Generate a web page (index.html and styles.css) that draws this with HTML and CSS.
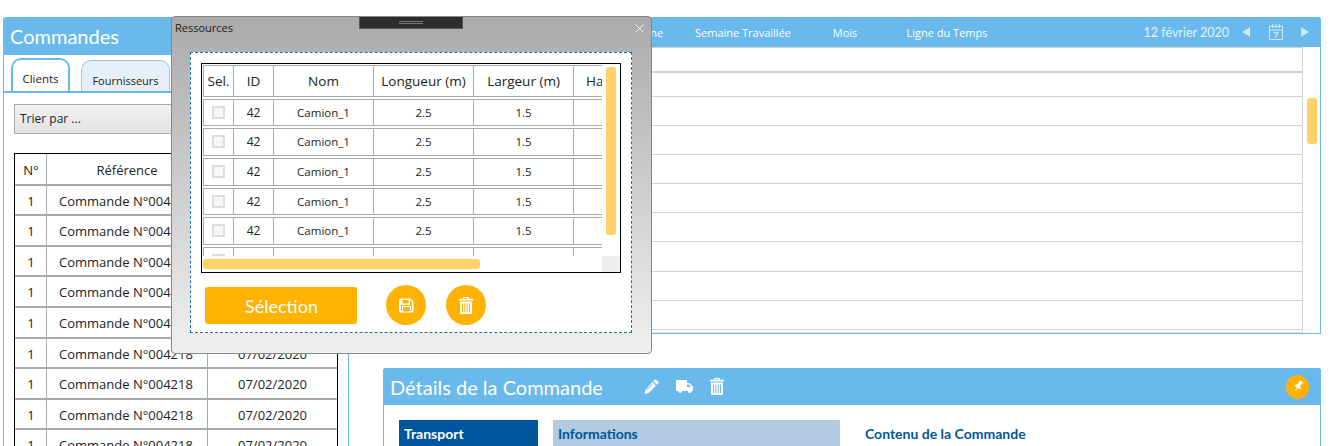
FILE: index.html
```html
<!DOCTYPE html>
<html lang="fr">
<head>
    <meta charset="UTF-8">
    <title>Commandes</title>
    <link rel="stylesheet" href="styles.css">
</head>

<body>
    <div class="app">
        <!-- Commandes -->
        <section class="orders">
            <h1 class="orders-title">Commandes</h1>
            <div class="tabs">
                <div class="tab active">Clients</div>
                <div class="tab">Fournisseurs</div>
            </div>
            <div class="sort">Trier par ...</div>
            <div class="orders-table">
                <div class="o-row o-head"><span>N°</span><span>Référence</span><span>Date</span></div>
                <div class="o-row"><span>1</span><span>Commande N°004218</span><span>07/02/2020</span></div>
                <div class="o-row"><span>1</span><span>Commande N°004218</span><span>07/02/2020</span></div>
                <div class="o-row"><span>1</span><span>Commande N°004218</span><span>07/02/2020</span></div>
                <div class="o-row"><span>1</span><span>Commande N°004218</span><span>07/02/2020</span></div>
                <div class="o-row"><span>1</span><span>Commande N°004218</span><span>07/02/2020</span></div>
                <div class="o-row"><span>1</span><span>Commande N°004218</span><span>07/02/2020</span></div>
                <div class="o-row"><span>1</span><span>Commande N°004218</span><span>07/02/2020</span></div>
                <div class="o-row"><span>1</span><span>Commande N°004218</span><span>07/02/2020</span></div>
                <div class="o-row"><span>1</span><span>Commande N°004218</span><span>07/02/2020</span></div>
            </div>
        </section>

        <div class="main">
            <!-- Planning -->
            <section class="planning">
                <div class="planning-bar">
                    <nav class="views">
                        <span>Jour</span>
                        <span>Semaine</span>
                        <span>Semaine Travaillée</span>
                        <span>Mois</span>
                        <span>Ligne du Temps</span>
                    </nav>
                    <span class="date">12 février 2020</span>
                    <svg class="date-icon" width="10" height="12" viewBox="0 0 10 12"><path d="M9 1 1 6l8 5z"/></svg>
                    <svg class="date-icon cal" width="16" height="18" viewBox="0 0 16 18">
                        <path d="M1.5 3.5h13v13h-13zM1.5 7h13M4.5 1v4M8 1v4M11.5 1v4" fill="none" stroke="currentColor"/>
                        <path d="M5.5 9h5v1.2L8 15H6.6l2.4-4.7H5.5z"/>
                    </svg>
                    <svg class="date-icon" width="10" height="12" viewBox="0 0 10 12"><path d="M1 1l8 5-8 5z"/></svg>
                </div>
                <div class="planning-body">
                    <div class="lines">
                        <div class="line first"></div>
                        <div class="line second"></div>
                        <div class="line"></div>
                        <div class="line"></div>
                        <div class="line"></div>
                        <div class="line"></div>
                        <div class="line"></div>
                        <div class="line"></div>
                        <div class="line"></div>
                        <div class="line"></div>
                    </div>
                    <div class="planning-scroll"><div class="thumb"></div></div>
                </div>
            </section>

            <!-- Détails -->
            <section class="details">
                <div class="details-bar">
                    <h2>Détails de la Commande</h2>
                    <div class="details-tools">
                        <svg width="15" height="15" viewBox="0 0 16 16"><path d="M11.3.8a1.2 1.2 0 0 1 1.7 0l2.2 2.2a1.2 1.2 0 0 1 0 1.700l-1.500 1.500-3.900-3.900zM8.800 3.300l3.900 3.900-8 8-4 .7.7-4zM8.800 5l-5.800 5.800.6.6 5.800-5.800z" fill-rule="evenodd"/></svg>
                        <svg width="17" height="14" viewBox="0 0 17 14"><path d="M1 0h9a1 1 0 0 1 1 1v2h2.500L17 6.500V11h-1.300a2 2 0 0 1-4 0H6.300a2 2 0 0 1-4 0H1a1 1 0 0 1-1-1V1a1 1 0 0 1 1-1zM11 4.500V7h4.200l-2.200-2.500z" fill-rule="evenodd"/></svg>
                        <svg width="14" height="17" viewBox="0 0 14 17"><path d="M4 1.800V1a1 1 0 0 1 1-1h4a1 1 0 0 1 1 1v.8h4v1.700H0V1.800zM5.300 1.800h3.400V1.100H5.300zM1 4.500h12V16a1 1 0 0 1-1 1H2a1 1 0 0 1-1-1zM3 6.500V15h1V6.500zM5.300 6.500V15h1V6.500zM7.700 6.500V15h1V6.500zM10 6.500V15h1V6.500z" fill-rule="evenodd"/></svg>
                    </div>
                    <div class="pin">
                        <svg width="8" height="13" viewBox="0 0 10 16"><path d="M2 0h6v1.200l-1 .5V6l2 2v1.500H1V8l2-2V1.700l-1-.5zM4.200 9.500h1.600L5 16z"/></svg>
                    </div>
                </div>
                <div class="details-body">
                    <div class="col-head transport">Transport</div>
                    <div class="col-head infos">Informations</div>
                    <div class="col-head content">Contenu de la Commande</div>
                </div>
            </section>
        </div>
    </div>

    <!-- Fenêtre Ressources -->
    <div class="dialog">
        <div class="grip"><i></i></div>
        <span class="dialog-title">Ressources</span>
        <svg class="dialog-close" width="9" height="9" viewBox="0 0 9 9"><path d="M.5.5l8 8M8.500.5l-8 8" fill="none" stroke="currentColor"/></svg>
        <div class="dialog-inner">
            <div class="res-box">
                <div class="res-view">
                    <div class="r-row r-head"><span>Sel.</span><span>ID</span><span>Nom</span><span>Longueur (m)</span><span>Largeur (m)</span><span>Hauteur (m)</span></div>
                    <div class="r-row"><span><i class="check"></i></span><span class="id">42</span><span>Camion_1</span><span>2.5</span><span>1.5</span><span></span></div>
                    <div class="r-row"><span><i class="check"></i></span><span class="id">42</span><span>Camion_1</span><span>2.5</span><span>1.5</span><span></span></div>
                    <div class="r-row"><span><i class="check"></i></span><span class="id">42</span><span>Camion_1</span><span>2.5</span><span>1.5</span><span></span></div>
                    <div class="r-row"><span><i class="check"></i></span><span class="id">42</span><span>Camion_1</span><span>2.5</span><span>1.5</span><span></span></div>
                    <div class="r-row"><span><i class="check"></i></span><span class="id">42</span><span>Camion_1</span><span>2.5</span><span>1.5</span><span></span></div>
                    <div class="r-row"><span><i class="check"></i></span><span class="id"></span><span></span><span></span><span></span><span></span></div>
                </div>
                <div class="res-vscroll"><div class="thumb"></div></div>
                <div class="res-hscroll"><div class="thumb"></div></div>
                <div class="res-corner"></div>
            </div>
            <div class="actions">
                <button class="btn-select">Sélection</button>
                <button class="btn-round">
                    <svg width="15" height="15" viewBox="0 0 15 15"><path d="M1.500.5h9.700l3.300 3.300v9.200a1.500 1.500 0 0 1-1.500 1.500h-11.500a1.500 1.500 0 0 1-1.500-1.500v-11a1.500 1.500 0 0 1 1.500-1.500zM3.500 2v3.500h6V2zM2 3.500V13h1V8h9v5h1V4.500L11 2v5H2zM4 9v4.500h7V9z" fill-rule="evenodd"/></svg>
                </button>
                <button class="btn-round">
                    <svg width="14" height="17" viewBox="0 0 14 17"><path d="M4 1.800V1a1 1 0 0 1 1-1h4a1 1 0 0 1 1 1v.8h4v1.700H0V1.800zM5.300 1.800h3.400V1.100H5.300zM1 4.500h12V16a1 1 0 0 1-1 1H2a1 1 0 0 1-1-1zM3 6.500V15h1V6.500zM5.300 6.500V15h1V6.500zM7.700 6.500V15h1V6.500zM10 6.500V15h1V6.500z" fill-rule="evenodd"/></svg>
                </button>
            </div>
        </div>
    </div>
</body>
</html>
```

FILE: styles.css
```css
/* General Reset */
* {
    margin: 0;
    padding: 0;
    box-sizing: border-box;
}

body {
    height: 446px;
    overflow: hidden;
    position: relative;
    background: white;
    color: #222;
    font-family: 'Open Sans', sans-serif;
    font-size: 12px;
}

.app {
    display: flex;
    gap: 34px;
    height: 446px;
    padding: 17px 12px 0 3px;
}

/* Commandes */
.orders {
    width: 346px;
    flex: none;
    overflow: hidden;
    border: 1px solid #69b9ec;
    border-bottom: none;
    border-radius: 3px 3px 0 0;
}

.orders-title {
    height: 37px;
    margin: 0 -1px;
    padding-left: 7px;
    background: #69b9ec;
    color: white;
    font-family: 'Lato', sans-serif;
    font-size: 20px;
    font-weight: normal;
    line-height: 36px;
}

.tabs {
    display: flex;
    align-items: flex-end;
    gap: 11px;
    height: 38px;
    padding-left: 7px;
    border-bottom: 2px solid #69b9ec;
}

.tab {
    width: 89px;
    height: 31px;
    padding-top: 12px;
    background: #e6eff7;
    border: 1px solid #9cc9ea;
    border-bottom: none;
    border-radius: 10px 10px 0 0;
    text-align: center;
    font-size: 11px;
}

.tab.active {
    width: 59px;
    height: 33px;
    padding-top: 11px;
    background: white;
    border: 2px solid #69b9ec;
    border-bottom: none;
    font-size: 11.5px;
}

.sort {
    height: 30px;
    margin: 11px 9px 19px 10px;
    padding-left: 5px;
    background: linear-gradient(#f3f3f3, #e2e2e2);
    border: 1px solid #aaa;
    line-height: 28px;
}

.orders-table {
    margin: 0 10px;
    border: 1px solid black;
    border-bottom: none;
}

.o-row {
    display: flex;
    height: 30.6px;
    border-bottom: 2px solid #aaa;
    font-size: 13px;
    line-height: 30px;
}

.o-head {
    height: 31.6px;
    line-height: 32px;
}

.o-row span {
    flex: none;
    border-right: 1px solid #aaa;
    text-align: center;
    white-space: nowrap;
}

.o-row span:nth-child(1) {
    width: 32px;
    padding-left: 1px;
}

.o-row span:nth-child(2) {
    width: 161px;
    padding-left: 12px;
    text-align: left;
}

.o-head span:nth-child(2) {
    padding-left: 0;
    text-align: center;
}

.o-row span:nth-child(3) {
    flex: 1;
    border-right: none;
}

/* Planning */
.main {
    flex: 1;
    min-width: 0;
    display: flex;
    flex-direction: column;
    gap: 34px;
}

.planning {
    height: 317px;
    flex: none;
    display: flex;
    flex-direction: column;
    border-bottom: 1px solid #69b9ec;
    border-right: 1px solid #69b9ec;
    border-radius: 3px 3px 0 0;
}

.planning-bar {
    height: 30px;
    flex: none;
    display: flex;
    align-items: center;
    margin-right: -1px;
    background: #69b9ec;
    border-radius: 3px 3px 0 0;
    color: white;
}

.views {
    display: flex;
    padding-left: 105px;
    flex: 1;
}

.views span {
    width: 102px;
    text-align: center;
    white-space: nowrap;
    font-size: 11px;
}

.date {
    margin-right: 12px;
    font-family: 'Lato', sans-serif;
    font-size: 12.5px;
    color: #e3f2fc;
}

.date-icon {
    flex: none;
    fill: #cfe7f8;
    color: #cfe7f8;
}

.date-icon.cal {
    margin: 0 16px 0 17px;
}

.date-icon:last-child {
    margin-right: 11px;
}

.planning-body {
    flex: 1;
    display: flex;
    min-height: 0;
}

.lines {
    flex: 1;
    display: flex;
    flex-direction: column;
    border-top: 1px solid #d3d3d3;
    border-right: 1px solid #d3d3d3;
    border-bottom: 1px solid #e3e3e3;
}

.line {
    height: 29.1px;
    flex: none;
    border-bottom: 1px solid #d3d3d3;
}

.line.first {
    height: 25px;
    border-bottom-width: 2px;
}

.line.second {
    height: 24px;
}

.planning-scroll {
    width: 17px;
    flex: none;
    padding: 51px 3px 0 4px;
}

.thumb {
    background: #ffd166;
    border-radius: 3px;
}

.planning-scroll .thumb {
    height: 46px;
}

/* Détails */
.details {
    flex: 1;
    min-height: 0;
    border-left: 1px solid #69b9ec;
    border-right: 1px solid #69b9ec;
    border-radius: 3px 3px 0 0;
}

.details-bar {
    height: 37px;
    display: flex;
    align-items: center;
    margin: 0 -1px;
    padding: 0 12px 0 7px;
    background: #69b9ec;
    border-radius: 3px 3px 0 0;
    color: white;
}

.details-bar h2 {
    width: 254px;
    flex: none;
    font-family: 'Lato', sans-serif;
    font-size: 20px;
    font-weight: normal;
}

.details-tools {
    flex: 1;
    display: flex;
    align-items: center;
    gap: 17px;
}

.details-tools svg {
    fill: white;
}

.pin {
    width: 23px;
    height: 24px;
    display: flex;
    align-items: center;
    justify-content: center;
    background: #ffb300;
    border-radius: 50%;
}

.pin svg {
    fill: white;
    transform: rotate(35deg);
}

.details-body {
    display: flex;
    padding: 15px 0 0 15px;
}

.col-head {
    height: 28px;
    padding-left: 5px;
    font-family: 'Lato', sans-serif;
    font-size: 14px;
    font-weight: bold;
    line-height: 27px;
}

.transport {
    width: 139px;
    background: #00569d;
    color: white;
}

.infos {
    width: 287px;
    margin-left: 15px;
    background: #b0cbe2;
    color: #00569d;
}

.content {
    margin-left: 20px;
    color: #00569d;
}

/* Fenêtre Ressources */
.dialog {
    position: absolute;
    left: 171px;
    top: 16px;
    width: 481px;
    height: 338px;
    padding: 35px 19px 20px 18px;
    background: linear-gradient(#aaa, #f0f0f0);
    border: 1px solid #888;
    border-radius: 4px;
}

.grip {
    position: absolute;
    left: 187px;
    top: 0;
    width: 104px;
    height: 12px;
    display: flex;
    align-items: center;
    justify-content: center;
    background: #2d2d30;
    border: 1px solid #555;
    border-top: none;
}

.grip i {
    width: 24px;
    height: 3px;
    border-top: 1px solid #777;
    border-bottom: 1px solid #777;
}

.dialog-title {
    position: absolute;
    left: 3px;
    top: 3px;
    font-size: 11px;
}

.dialog-close {
    position: absolute;
    right: 7px;
    top: 7px;
    color: #eee;
}

.dialog-inner {
    height: 100%;
    padding: 10px;
    background: white;
    border: 1px dashed #1c6ea4;
}

.res-box {
    height: 210px;
    display: grid;
    grid-template-columns: 1fr 18px;
    grid-template-rows: 1fr 16px;
    border: 1px solid black;
}

.res-view {
    overflow: hidden;
    padding: 1px 0 0 1px;
    min-width: 0;
    min-height: 0;
}

.r-row {
    display: flex;
    width: 500px;
    height: 27.7px;
    margin-bottom: 2px;
    border-top: 1px solid #aaa;
    border-bottom: 1px solid #aaa;
    font-size: 11.5px;
    line-height: 25px;
    text-align: center;
}

.r-head {
    height: 31.7px;
    font-size: 13.5px;
    line-height: 30px;
}

.r-row span {
    flex: none;
    width: 100px;
    border-right: 1px solid #aaa;
    white-space: nowrap;
}

.r-row span:nth-child(1) {
    width: 31px;
    border-left: 1px solid #aaa;
}

.r-row span:nth-child(2) {
    width: 40px;
}

.r-row .id {
    font-size: 12px;
}

.r-row span:last-child {
    border-right: none;
}

.check {
    display: inline-block;
    width: 13px;
    height: 13px;
    margin-top: 6px;
    vertical-align: top;
    background: #f7f7f7;
    border: 2px solid #ddd;
}

.res-vscroll {
    padding: 3px 4px 0;
}

.res-vscroll .thumb {
    height: 168px;
}

.res-hscroll {
    padding: 3px 0 0 1px;
}

.res-hscroll .thumb {
    width: 277px;
    height: 10px;
}

.res-corner {
    background: #eee;
}

.actions {
    display: flex;
    align-items: center;
    margin-top: 12px;
    padding-left: 4px;
}

.btn-select {
    width: 152px;
    height: 37px;
    padding: 2px 0 0 1px;
    background: #ffb300;
    border: none;
    border-radius: 3px;
    color: white;
    font-family: 'Lato', sans-serif;
    font-size: 18px;
}

.btn-round {
    width: 40px;
    height: 40px;
    display: flex;
    align-items: center;
    justify-content: center;
    margin-left: 20px;
    background: #ffb300;
    border: none;
    border-radius: 50%;
}

.btn-round svg {
    fill: white;
}

.btn-select + .btn-round {
    margin-left: 29px;
}
```
